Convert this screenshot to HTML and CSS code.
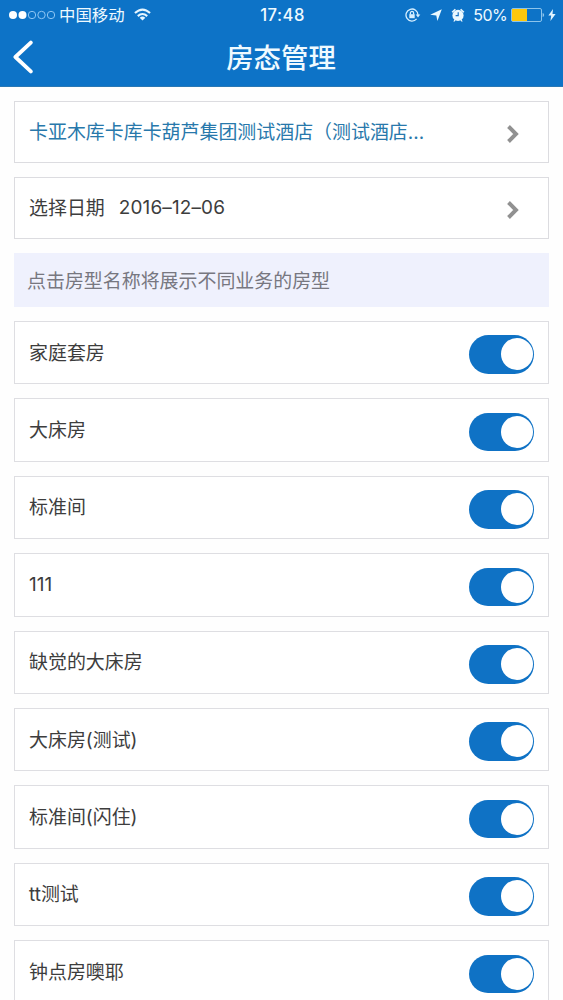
FILE: index.html
```html
<!DOCTYPE html>
<html lang="zh-CN">
<head>
<meta charset="utf-8">
<title>房态管理</title>
<link rel="stylesheet" href="styles.css">
</head>
<body>
<header class="header">
  <div class="status">
    <div class="status-left">
      <svg class="signal" width="48" height="12" viewBox="0 0 48 12">
        <g fill="#fff"><circle cx="5" cy="6" r="4"/><circle cx="14.5" cy="6" r="4"/></g>
        <g fill="none" stroke="#8fc6f4" stroke-width="1"><circle cx="24" cy="6" r="3.7"/><circle cx="33.5" cy="6" r="3.7"/><circle cx="43" cy="6" r="3.7"/></g>
      </svg>
      <span class="carrier">中国移动</span>
      <svg class="wifi" width="17" height="13" viewBox="0 0 18 13" fill="none" stroke="#e6f6ff" stroke-width="2.2">
        <path d="M1 5 Q9 -2.4 17 5M4 8.2 Q9 3.7 14 8.2"/>
        <path d="M9 12.8 L6 9.9 Q9 7.6 12 9.9Z" fill="#e6f6ff" stroke="none"/>
      </svg>
    </div>
    <span class="clock">17:48</span>
    <div class="status-right">
      <svg width="16" height="14" viewBox="0 0 16 14" fill="none" stroke="#d6efff" stroke-width="1.3">
        <path d="M11.6 10.9A6 6 0 1 1 13 7"/>
        <path d="M10.7 6.6h4.6L13 9.4z" fill="#d6efff" stroke="none"/>
        <path d="M4.3 6.2h5.4v4H4.3z" fill="#d6efff" stroke="none"/>
        <path d="M5.4 6.4V5a1.6 1.6 0 0 1 3.2 0v1.4"/>
      </svg>
      <svg class="arrow" width="12" height="12" viewBox="0 0 12 12"><path d="M11.8.2 7.4 12 6.3 6.4 .2 5.8z" fill="#e8f8ff"/></svg>
      <svg class="alarm" width="14" height="14" viewBox="0 0 14 14">
        <g fill="#eaf8ff"><circle cx="7" cy="7.4" r="5.6"/><path d="M.6 3.7 3.8.8 4.9 1.8 1.6 4.8zM13.4 3.7 10.2.8 9.1 1.8 12.4 4.8zM2.3 13.4l1.2-2.2 1.2.8-1 1.4zM11.7 13.4l-1.2-2.2-1.2.8 1 1.4z"/></g>
        <path d="M7.2 4.2v3.4H4.6" fill="none" stroke="#1873c5" stroke-width="1.2"/>
      </svg>
      <span class="percent">50%</span>
      <svg class="battery" width="34" height="14" viewBox="0 0 34 14">
        <rect x=".5" y=".5" width="30" height="13" rx="1.5" fill="none" stroke="#8cc4ec"/>
        <path d="M1 1h15v12H1z" fill="#fdc70c"/>
        <path d="M31.6 5c2 .3 2 3.7 0 4z" fill="#8cc4ec"/>
      </svg>
      <svg class="bolt" width="8" height="12" viewBox="0 0 8 12"><path d="M5 0 .4 6.6h2.8L2.4 12 7.6 4.9H4.5z" fill="#e0f4ff"/></svg>
    </div>
  </div>
  <div class="navbar">
    <svg class="back" width="20" height="34" viewBox="0 0 20 34"><path d="M17.8 2.6 2.4 17 17.8 31.4" fill="none" stroke="#fff" stroke-width="3.8" stroke-linecap="round" stroke-linejoin="round"/></svg>
    <h1 class="title">房态管理</h1>
  </div>
</header>
<main class="content">
  <div class="picker hotel"><span>卡亚木库卡库卡葫芦集团测试酒店（测试酒店...</span>
    <svg class="chevron" width="12" height="18" viewBox="0 0 12 18"><path d="M1.5 1.5 9 9 1.5 16.5" fill="none" stroke="#919191" stroke-width="3.9"/></svg>
  </div>
  <div class="picker date"><span>选择日期</span><span class="date-value">2016–12–06</span>
    <svg class="chevron" width="12" height="18" viewBox="0 0 12 18"><path d="M1.5 1.5 9 9 1.5 16.5" fill="none" stroke="#919191" stroke-width="3.9"/></svg>
  </div>
  <p class="notice">点击房型名称将展示不同业务的房型</p>
  <ul class="rooms">
    <li class="room"><span>家庭套房</span><i class="switch"></i></li>
    <li class="room"><span>大床房</span><i class="switch"></i></li>
    <li class="room"><span>标准间</span><i class="switch"></i></li>
    <li class="room"><span class="digits">111</span><i class="switch"></i></li>
    <li class="room"><span>缺觉的大床房</span><i class="switch"></i></li>
    <li class="room"><span>大床房(测试)</span><i class="switch"></i></li>
    <li class="room"><span>标准间(闪住)</span><i class="switch"></i></li>
    <li class="room"><span>tt测试</span><i class="switch"></i></li>
    <li class="room"><span>钟点房噢耶</span><i class="switch"></i></li>
  </ul>
</main>
</body>
</html>
```

FILE: styles.css
```css
* { box-sizing: border-box; }
html { height: 1000px; overflow: hidden; }
body {
  margin: 0;
  height: 1000px;
  overflow: hidden;
  background: #fefefe;
  color: #3d3d3d;
  font-family: Inter, "Noto Sans CJK SC", sans-serif;
  font-size: 18.95px;
  line-height: 28px;
}
svg { display: block; flex: none; }
.header { height: 87px; background: #0d73c7; color: #effaff; border-bottom: 1px solid #2a78b4; }
.status {
  display: grid;
  grid-template-columns: 1fr auto 1fr;
  align-items: center;
  height: 28px;
  padding: 0 7px 0 8px;
  font-size: 16.4px;
}
.status-left, .status-right { display: flex; align-items: center; }
.carrier { margin-left: 3px; padding-top: 1px; }
.wifi { margin-left: 9px; }
.clock { padding: 1px 0 0 1px; font-size: 16.6px; font-weight: 500; letter-spacing: .5px; }
.status-right { justify-content: flex-end; }
.arrow { margin-left: 9px; }
.alarm { margin-left: 9px; }
.percent { margin-left: 8px; padding-top: 1px; font-size: 16px; letter-spacing: -.6px; }
.battery { margin-left: 4px; }
.bolt { margin-left: 3px; }
.navbar {
  display: grid;
  grid-template-columns: 40px 1fr 40px;
  align-items: center;
  height: 58px;
  padding: 0 0 0 13px;
}
.title { margin: 0 14px 0 0; padding-top: 2px; font-size: 27.4px; font-weight: 500; line-height: 40px; text-align: center; }
.content { padding: 14px 14px 0; }
.picker {
  display: flex;
  align-items: center;
  height: 62px;
  margin-bottom: 14px;
  padding: 0 29px 0 14px;
  border: 1px solid #dcdce0;
  background: #fff;
}
.picker > span:first-child, .room > span { padding-top: 2px; }
.hotel { color: #2878ab; }
.date-value { margin-left: 14px; letter-spacing: .15px; }
.chevron { margin-left: auto; margin-top: 3px; }
.notice { height: 54px; margin: 0 0 14px; padding: 2px 0 0 13px; background: #eff1fd; color: #777780; line-height: 54px; }
.rooms { display: grid; grid-auto-rows: 63.4px; gap: 14px; margin: 0; padding: 0; list-style: none; }
.room {
  display: flex;
  align-items: center;
  justify-content: space-between;
  padding: 0 14px;
  border: 1px solid #dedee2;
  background: #fff;
}
.room > .digits { padding-top: 0; }
.switch {
  display: flex;
  justify-content: flex-end;
  width: 65px;
  height: 38.5px;
  margin-top: 4px;
  padding: 3px 1px;
  border-radius: 20px;
  background: #0f72c5;
}
.switch::before { content: ""; width: 32px; height: 32px; border-radius: 50%; background: #fff; }
```
